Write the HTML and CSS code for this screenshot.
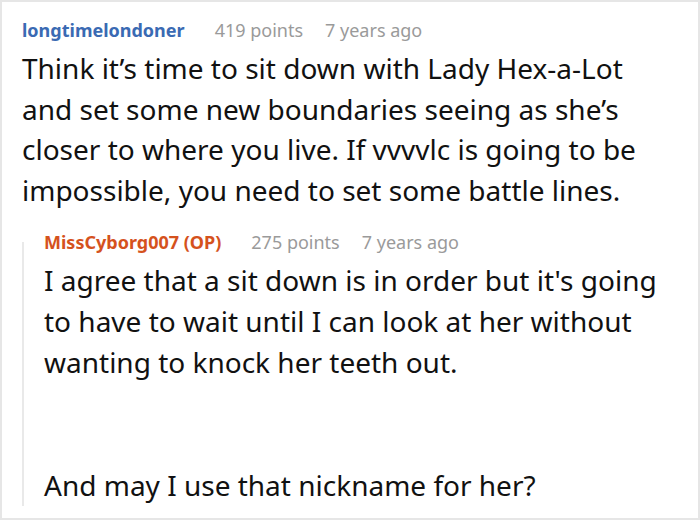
FILE: index.html
```html
<!DOCTYPE html>
<html>
<head>
<meta charset="utf-8">
<link rel="stylesheet" href="styles.css">
</head>
<body>
<div class="card">
  <div class="comment">
    <div class="meta">
      <span class="author">longtimelondoner</span>
      <span class="info">419 points</span>
      <span class="info">7 years ago</span>
    </div>
    <p class="text">Think it’s time to sit down with Lady Hex-a-Lot and set some new boundaries seeing as she’s closer to where you live. If vvvvlc is going to be impossible, you need to set some battle lines.</p>
    <div class="reply">
      <div class="rail"></div>
      <div class="reply-body">
        <div class="meta">
          <span class="author op">MissCyborg007 (OP)</span>
          <span class="info">275 points</span>
          <span class="info">7 years ago</span>
        </div>
        <p class="text text-reply">I agree that a sit down is in order but it's going to have to wait until I can look at her without wanting to knock her teeth out.</p>
        <p class="text text-reply text-last">And may I use that nickname for her?</p>
      </div>
    </div>
  </div>
</div>
</body>
</html>
```
FILE: styles.css
```css
html, body {
  margin: 0;
  padding: 0;
  background: #fff;
}
body {
  font-family: "Noto Sans", "Open Sans", sans-serif;
  color: #111;
}
.card {
  box-sizing: border-box;
  width: 700px;
  height: 520px;
  border: 2px solid #e6e6e6;
  overflow: hidden;
  padding: 14px 40px 0 20px;
}
.meta {
  display: flex;
  align-items: baseline;
  gap: 22px;
  font-size: 18px;
  line-height: 28px;
  white-space: nowrap;
}
.author {
  font-weight: 700;
  color: #3a6ab3;
  margin-right: 8px;
}
.info {
  color: #9a9a9a;
}
.text {
  margin: 4px 0 0 0;
  font-size: 28px;
  line-height: 40.5px;
  color: #111;
}
.text-reply {
  line-height: 41px;
}
.text-last {
  margin-top: 82px;
}
.reply {
  margin-top: 18px;
  display: grid;
  grid-template-columns: 2px 1fr;
  column-gap: 20px;
}
.rail {
  background: #e9e9e9;
  margin-top: 14px;
}
.op {
  color: #d5521d;
}
```
